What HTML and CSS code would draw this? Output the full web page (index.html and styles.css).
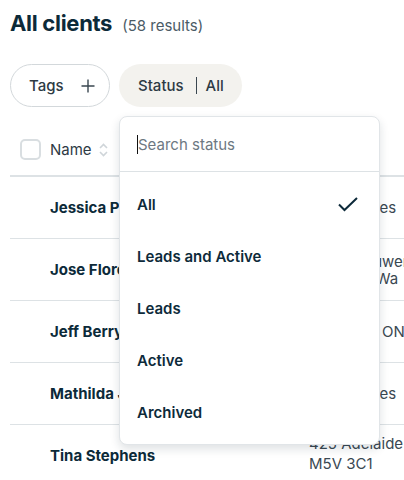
FILE: index.html
```html
<!DOCTYPE html>
<html lang="en">
<head>
<meta charset="utf-8">
<title>All clients</title>
<link rel="stylesheet" href="styles.css">
</head>
<body>
<div class="page">
  <header class="title-row">
    <h1 class="title">All clients</h1>
    <span class="count">(58 results)</span>
  </header>

  <div class="filters">
    <button class="pill pill-tags">Tags
      <svg class="plus" width="14" height="14" viewBox="0 0 14 14"><path d="M7 0.5v13M0.5 7h13" stroke="#3a4750" stroke-width="1.4" fill="none"/></svg>
    </button>
    <div class="status-wrap">
      <button class="pill pill-status">Status<span class="divider"></span>All</button>
      <div class="dropdown">
        <div class="search"><span class="caret"></span><span class="placeholder">Search status</span></div>
        <ul class="options">
          <li class="option selected">All
            <svg class="check" width="20" height="15" viewBox="0 0 20 15"><path d="M1 7.5l5.5 5.5L19 1" stroke="#0d2a3a" stroke-width="2" fill="none"/></svg>
          </li>
          <li class="option">Leads and Active</li>
          <li class="option">Leads</li>
          <li class="option">Active</li>
          <li class="option">Archived</li>
        </ul>
      </div>
    </div>
  </div>

  <div class="table">
    <div class="row head">
      <span class="checkbox"></span>
      <span class="col-name">Name
        <svg class="sort" width="9" height="14" viewBox="0 0 9 14"><path d="M1 5l3.5-3.5L8 5M1 9l3.5 3.5L8 9" stroke="#cfd5d9" stroke-width="1.6" fill="none"/></svg>
      </span>
      <span class="col-addr"></span>
    </div>
    <div class="row">
      <span class="cell-check"></span>
      <span class="name">Jessica Parker</span>
      <span class="addr">Los Angeles</span>
    </div>
    <div class="row">
      <span class="cell-check"></span>
      <span class="name">Jose Flores</span>
      <span class="addr">12745 Bauwer<br>Kirkland, Wa</span>
    </div>
    <div class="row">
      <span class="cell-check"></span>
      <span class="name">Jeff Berry</span>
      <span class="addr">Brampton ON</span>
    </div>
    <div class="row">
      <span class="cell-check"></span>
      <span class="name">Mathilda Jones</span>
      <span class="addr">Los Angeles</span>
    </div>
    <div class="row">
      <span class="cell-check"></span>
      <span class="name">Tina Stephens</span>
      <span class="addr addr-tall">425 Adelaide<br>M5V 3C1</span>
    </div>
  </div>
</div>
</body>
</html>
```

FILE: styles.css
```css
* { box-sizing: border-box; }
html, body { margin: 0; padding: 0; background: #fff; }
body {
  font-family: Inter, "Noto Sans", sans-serif;
  color: #0d2a3a;
  overflow: hidden;
  width: 404px;
  height: 480px;
}
.page { padding: 10px 0 0 10px; }

.title-row { display: flex; align-items: baseline; gap: 10px; height: 27px; }
.title { margin: 0; font-size: 22px; font-weight: 700; letter-spacing: -0.3px; color: #0c2a39; line-height: 27px; }
.count { font-size: 15px; color: #4b5b66; }

.filters { display: flex; gap: 9px; margin-top: 27px; }
.pill {
  display: flex; align-items: center;
  height: 43px;
  border-radius: 22px;
  font-family: inherit;
  font-size: 15px;
  font-weight: 500;
  color: #2d3a44;
  padding: 0;
  cursor: pointer;
}
.pill-tags {
  width: 100px;
  border: 1px solid #d3d8db;
  background: #fff;
  padding-left: 18px;
  gap: 17px;
}
.status-wrap { position: relative; }
.pill-status {
  width: 123px;
  border: none;
  background: #f3f2ee;
  padding-left: 19px;
}
.divider { width: 1px; height: 17px; background: #3a4750; margin: 0 9px 0 12px; }

.dropdown {
  position: absolute;
  top: 52px; left: 0;
  width: 261px;
  background: #fff;
  border: 1px solid #e1e5e8;
  border-radius: 8px;
  box-shadow: 0 4px 10px rgba(20, 40, 55, 0.14);
  z-index: 5;
}
.search { height: 55px; display: flex; align-items: center; padding-left: 17px; border-bottom: 1px solid #dde2e5; }
.caret { width: 1px; height: 19px; background: #111; }
.placeholder { font-size: 15px; color: #6d7882; }
.options { list-style: none; margin: 0; padding: 6px 0 6px; }
.option {
  height: 52px;
  display: flex; align-items: center; justify-content: space-between;
  padding: 0 21px 0 17px;
  font-size: 15px; font-weight: 600; color: #0d2a3a;
}

.table { margin-top: 17px; }
.row {
  display: grid;
  grid-template-columns: 40px 259px 1fr;
  align-items: center;
  height: 62px;
  border-bottom: 1px solid #dde2e5;
}
.row.head { height: 53px; border-bottom: 2px solid #dde2e5; }
.checkbox { width: 21px; height: 21px; border: 2px solid #d9dee1; border-radius: 5px; margin-left: 10px; }
.col-name { display: flex; align-items: center; gap: 7px; font-size: 15px; color: #2d3a44; }
.name { font-size: 15px; font-weight: 700; color: #0c2a39; }
.addr { font-size: 15px; color: #3a4852; line-height: 17px; white-space: nowrap; }
.addr-tall { line-height: 20px; margin-top: -4px; }
```
